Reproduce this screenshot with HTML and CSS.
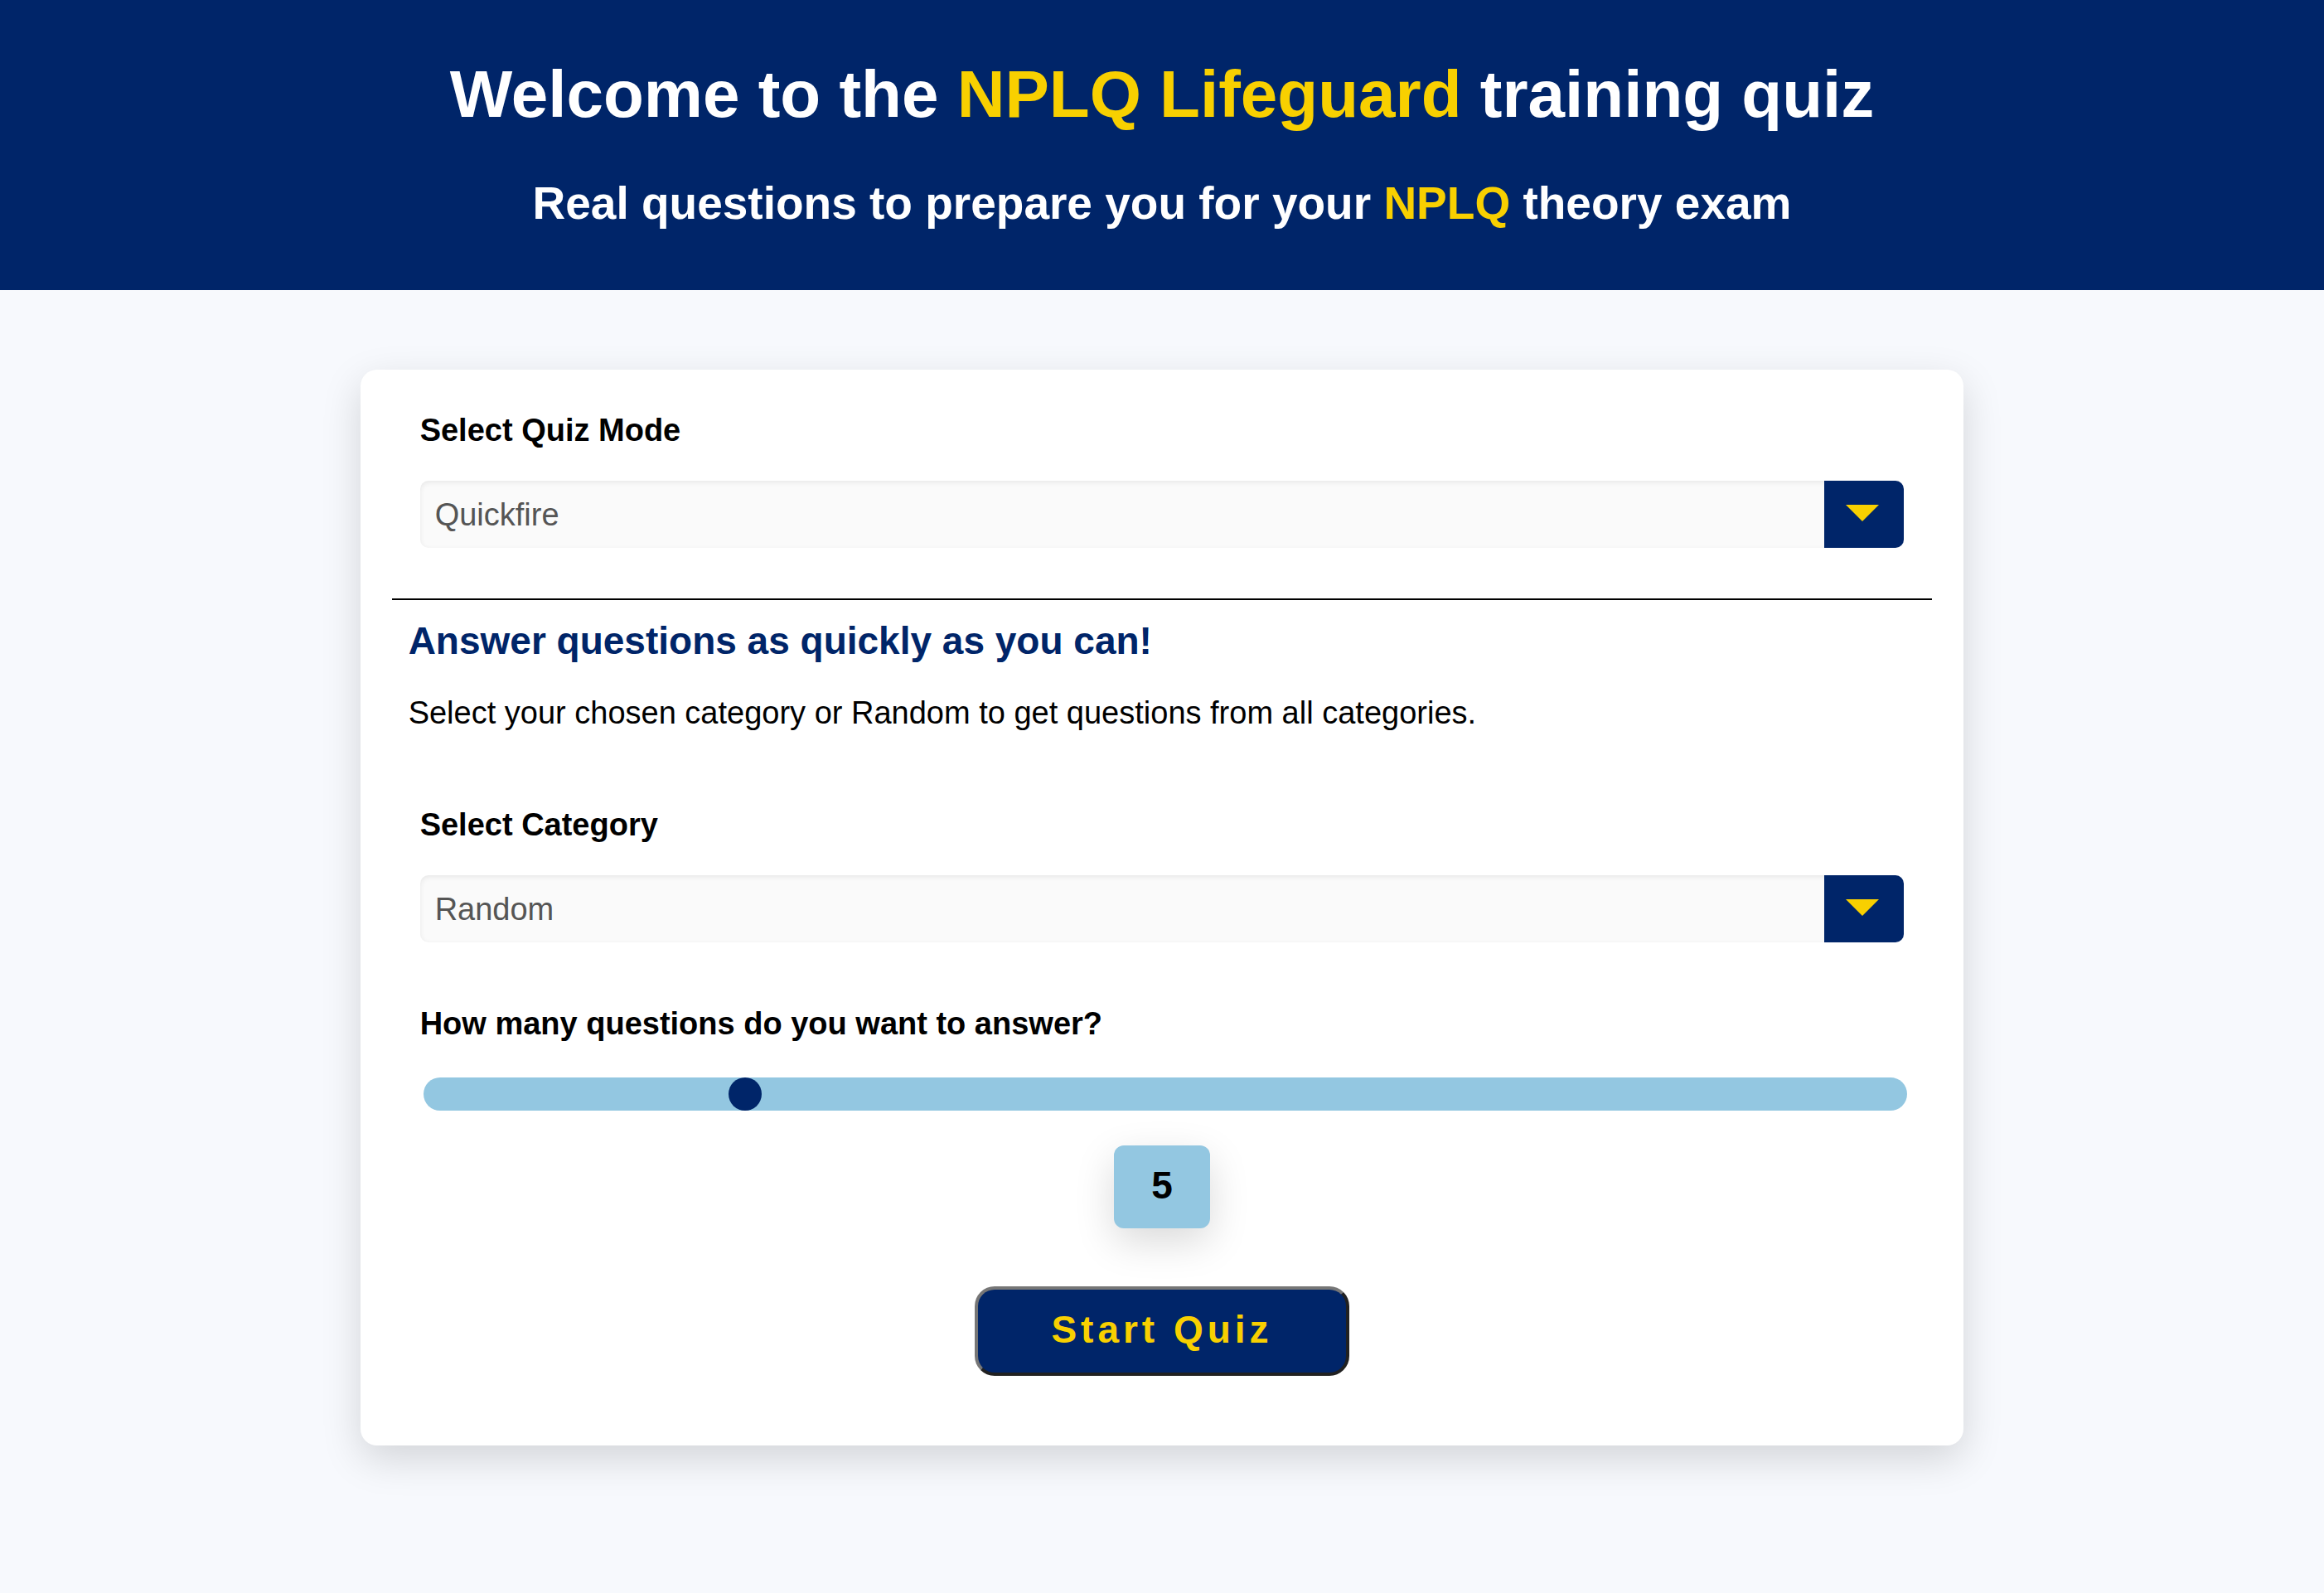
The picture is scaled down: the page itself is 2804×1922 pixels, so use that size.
FILE: index.html
```html
<!DOCTYPE html>
<html lang="en">
<head>
  <meta charset="utf-8">
  <meta name="viewport" content="width=device-width, initial-scale=1">
  <title>NPLQ Lifeguard training quiz</title>
  <link rel="stylesheet" href="styles.css">
</head>
<body>
  <header class="site-header">
    <h1 class="site-title">Welcome to the <span class="highlight">NPLQ Lifeguard</span> training quiz</h1>
    <p class="site-subtitle">Real questions to prepare you for your <span class="highlight">NPLQ</span> theory exam</p>
  </header>

  <main class="page">
    <form class="quiz-card">
      <div class="field">
        <label class="field-label" for="mode">Select Quiz Mode</label>
        <div class="dropdown">
          <select class="dropdown-select" id="mode" name="mode">
            <option selected>Quickfire</option>
          </select>
          <span class="dropdown-arrow" aria-hidden="true"></span>
        </div>
      </div>

      <section class="mode-info">
        <h2 class="mode-title">Answer questions as quickly as you can!</h2>
        <p class="mode-text">Select your chosen category or Random to get questions from all categories.</p>
      </section>

      <div class="field">
        <label class="field-label" for="category">Select Category</label>
        <div class="dropdown">
          <select class="dropdown-select" id="category" name="category">
            <option selected>Random</option>
          </select>
          <span class="dropdown-arrow" aria-hidden="true"></span>
        </div>
      </div>

      <div class="field field-amount">
        <label class="field-label" for="amount">How many questions do you want to answer?</label>
        <input class="slider" type="range" id="amount" name="amount" min="1" max="20" value="5">
      </div>

      <div class="actions">
        <output class="amount-value" for="amount" id="amount-value">5</output>
        <button class="start-button" type="button">Start Quiz</button>
      </div>
    </form>
  </main>

  <script src="script.js"></script>
</body>
</html>
```
FILE: script.js
```js
const amount = document.getElementById('amount');
const amountValue = document.getElementById('amount-value');

amount.addEventListener('input', () => {
  amountValue.textContent = amount.value;
});
```
FILE: styles.css
```css
:root {
  --navy: #002569;
  --yellow: #f8d000;
  --sky: #93c7e1;
  --soft-shadow: 0 16px 48px rgba(0, 0, 0, 0.15);
}

* {
  box-sizing: border-box;
}

body {
  margin: 0;
  background: #f7f9fd;
  color: #000;
  font-family: Arial, "Liberation Sans", sans-serif;
  font-size: 38px;
  line-height: 44px;
}

.site-header {
  display: flex;
  flex-direction: column;
  gap: 53px;
  padding: 68px 32px 73px;
  background: var(--navy);
  color: #fff;
  text-align: center;
}

.site-title {
  margin: 0;
  font-size: 80px;
  line-height: 92px;
}

.site-subtitle {
  margin: 0;
  font-size: 55px;
  font-weight: bold;
  line-height: 64px;
}

.highlight {
  color: var(--yellow);
}

.page {
  padding: 96px 0;
}

.quiz-card {
  width: 69%;
  margin: 0 auto;
  padding: 51px 38px 84px;
  border-radius: 20px;
  background: #fff;
  box-shadow: var(--soft-shadow);
}

.field {
  display: flex;
  flex-direction: column;
  gap: 39px;
  padding: 0 34px;
}

.field-label {
  font-weight: bold;
}

.dropdown {
  position: relative;
}

.dropdown-select {
  display: block;
  width: 100%;
  height: 81px;
  padding: 0 114px 0 18px;
  border: 0;
  border-radius: 10px;
  appearance: none;
  background: #fafafa;
  box-shadow: inset 0 2px 6px rgba(0, 0, 0, 0.08);
  color: #555;
  font: inherit;
}

.dropdown-arrow {
  position: absolute;
  top: 0;
  right: 0;
  bottom: 0;
  display: flex;
  align-items: center;
  justify-content: center;
  width: 96px;
  padding: 0 4px 4px 0;
  border-radius: 0 10px 10px 0;
  background: var(--navy);
  pointer-events: none;
}

.dropdown-arrow::after {
  content: "";
  border: 20px solid transparent;
  border-top-color: var(--yellow);
  border-bottom: 0;
}

.mode-info {
  margin: 61px 0 91px;
  padding: 23px 20px 0;
  border-top: 2px solid #000;
}

.mode-title {
  margin: 0 0 39px;
  color: var(--navy);
  font-size: 46px;
  line-height: 52px;
}

.mode-text {
  margin: 0;
}

.field-amount {
  gap: 43px;
  margin-top: 76px;
  padding: 0 30px 0 38px;
}

.field-amount .field-label {
  margin-left: -4px;
}

.slider {
  width: 100%;
  height: 40px;
  margin: 0;
  border-radius: 20px;
  appearance: none;
  background: var(--sky);
}

.slider::-webkit-slider-thumb {
  width: 40px;
  height: 40px;
  border: 0;
  border-radius: 50%;
  appearance: none;
  background: var(--navy);
}

.slider::-moz-range-thumb {
  width: 40px;
  height: 40px;
  border: 0;
  border-radius: 50%;
  background: var(--navy);
}

.actions {
  display: flex;
  flex-direction: column;
  align-items: center;
  gap: 70px;
  margin-top: 42px;
}

.amount-value {
  min-width: 116px;
  padding: 22px 24px 26px;
  border-radius: 12px;
  background: var(--sky);
  box-shadow: var(--soft-shadow);
  font-size: 46px;
  font-weight: bold;
  line-height: 52px;
  text-align: center;
}

.start-button {
  padding: 22px 88px 26px;
  border: 4px solid;
  border-color: #767676 #212121 #212121 #767676;
  border-radius: 24px;
  background: var(--navy);
  color: var(--yellow);
  font-family: inherit;
  font-size: 46px;
  font-weight: bold;
  letter-spacing: 5px;
  line-height: 52px;
}
```
